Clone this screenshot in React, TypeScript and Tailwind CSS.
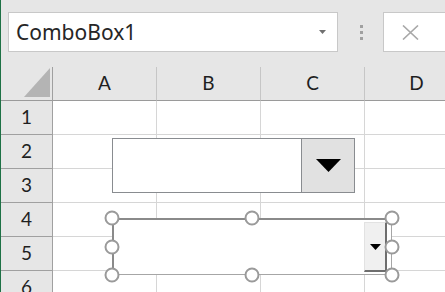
import React from "react";

const labelFont = { fontFamily: "Lato, 'Open Sans', sans-serif" };

function Handle({ pos }: { pos: string }) {
  return (
    <div
      className={`absolute w-[15px] h-[15px] rounded-full bg-white border-2 border-[#9a9a9a] -translate-x-1/2 -translate-y-1/2 ${pos}`}
    />
  );
}

export default function App() {
  const cols = ["A", "B", "C", "D"];
  const rows = [1, 2, 3, 4, 5, 6];
  return (
    <div
      className="relative w-[445px] h-[292px] overflow-hidden bg-[#e6e6e6] border-l border-[#1e7145]"
      style={{ fontFamily: "'Noto Sans', sans-serif" }}
    >
      {/* formula bar */}
      <div className="flex h-[67px] pt-[12px] pl-[7px]">
        <div className="flex w-[330px] h-[40px] shrink-0 items-center justify-between bg-white border border-[#c8c8c8] pl-[7px] pr-[11px]">
          <span className="text-[21px] leading-none text-[#262626] mt-[1px]">ComboBox1</span>
          <svg width="7" height="4" viewBox="0 0 7 4">
            <polygon points="0,0 7,0 3.5,4" fill="#707070" />
          </svg>
        </div>
        <div className="flex w-[45px] h-[40px] shrink-0 flex-col items-center justify-center gap-[3px] pl-[1px]">
          <div className="w-[3px] h-[3px] bg-[#a0a0a0]" />
          <div className="w-[3px] h-[3px] bg-[#a0a0a0]" />
          <div className="w-[3px] h-[3px] bg-[#a0a0a0]" />
        </div>
        <div className="flex w-[80px] h-[40px] shrink-0 items-center bg-white border border-[#c8c8c8] pl-[18px]">
          <svg width="17" height="15" viewBox="0 0 17 15">
            <path d="M1 0.5 L16 14.5 M16 0.5 L1 14.5" stroke="#a8a8a8" strokeWidth="1.6" fill="none" />
          </svg>
        </div>
      </div>

      {/* grid */}
      <div className="grid grid-cols-[52px_104px_104px_104px_104px]" style={labelFont}>
        {/* header row */}
        <div className="flex h-[34px] items-end justify-end pr-[2px] pb-[3px] border-r border-b border-r-[#a0a0a0] border-b-[#9a9a9a]">
          <svg width="26" height="29" viewBox="0 0 26 29">
            <polygon points="0,29 26,0 26,29" fill="#b4b4b4" />
          </svg>
        </div>
        {cols.map((c) => (
          <div
            key={c}
            className="flex h-[34px] items-center justify-center border-r border-b border-r-[#c6c6c6] border-b-[#9a9a9a] text-[19px] text-[#1f1f1f]"
          >
            {c}
          </div>
        ))}
        {rows.map((r) => (
          <React.Fragment key={r}>
            <div className="flex h-[34px] items-center justify-center border-r border-b border-[#a0a0a0] text-[19px] text-[#1f1f1f]">
              {r}
            </div>
            {cols.map((c) => (
              <div key={c} className="h-[34px] bg-white border-r border-b border-[#d6d6d6]" />
            ))}
          </React.Fragment>
        ))}
      </div>

      {/* ComboBox 1 (form control) */}
      <div className="absolute left-[111px] top-[138px] flex w-[243px] h-[55px] bg-white border border-[#898c90]">
        <div className="flex-1" />
        <div className="flex w-[53px] items-center justify-center bg-[#e1e1e1] border-l border-[#898c90]">
          <svg width="25" height="13" viewBox="0 0 25 13">
            <polygon points="0,0 25,0 12.5,13" fill="#000" />
          </svg>
        </div>
      </div>

      {/* ComboBox 2 (ActiveX, selected) */}
      <div className="absolute left-[111px] top-[218px] w-[280px] h-[57px]">
        <div className="flex w-full h-full bg-white border-t-2 border-l-2 border-[#8a8a8a] border-r border-b border-r-[#a6a6a6] border-b-[#a6a6a6]">
          <div className="flex-1" />
          <div className="flex w-[23px] mt-[2px] mb-[2px] mr-[4px] items-center justify-center bg-[#f0f0f0] border-l border-t border-[#e2e2e2] border-r-2 border-b-2 border-r-[#6e6e6e] border-b-[#6e6e6e]">
            <svg width="11" height="6" viewBox="0 0 11 6">
              <polygon points="0,0 11,0 5.5,6" fill="#000" />
            </svg>
          </div>
        </div>
        <Handle pos="left-0 top-0" />
        <Handle pos="left-1/2 top-0" />
        <Handle pos="left-full top-0" />
        <Handle pos="left-0 top-1/2" />
        <Handle pos="left-full top-1/2" />
        <Handle pos="left-0 top-full" />
        <Handle pos="left-1/2 top-full" />
        <Handle pos="left-full top-full" />
      </div>
    </div>
  );
}
